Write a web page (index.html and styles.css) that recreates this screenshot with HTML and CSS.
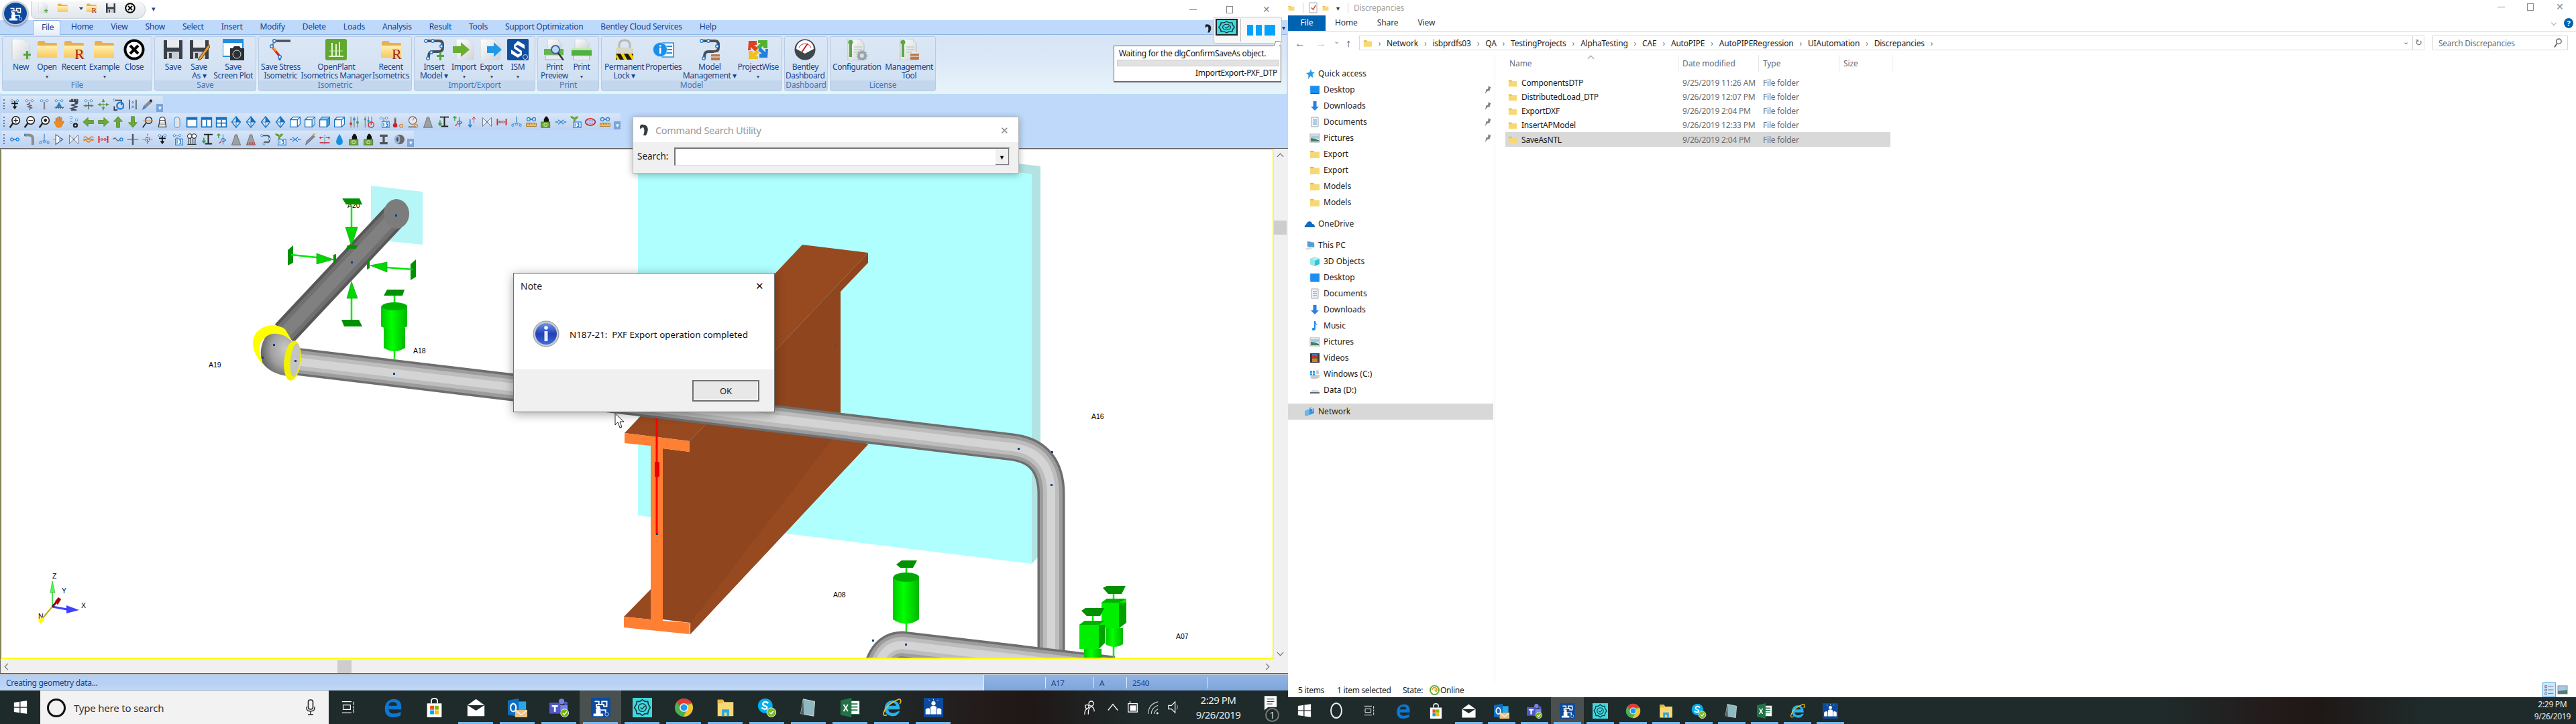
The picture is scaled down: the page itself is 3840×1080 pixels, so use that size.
FILE: index.html
```html
<!DOCTYPE html>
<html lang="en">
<head>
<meta charset="utf-8">
<title>AutoPIPE and Discrepancies</title>
<link rel="stylesheet" href="styles.css">
</head>
<body>
<svg class="defs" width="0" height="0" aria-hidden="true">
<defs>
<linearGradient id="gFolder" x1="0" y1="0" x2="0" y2="1"><stop offset="0" stop-color="#fff0b0"/><stop offset="1" stop-color="#f8c860"/></linearGradient>
<linearGradient id="gPage" x1="0" y1="0" x2="1" y2="1"><stop offset="0" stop-color="#fff"/><stop offset="1" stop-color="#cfd4d8"/></linearGradient>
<linearGradient id="gGreen" x1="0" y1="0" x2="1" y2="0"><stop offset="0" stop-color="#00c800"/><stop offset=".4" stop-color="#00ff00"/><stop offset="1" stop-color="#00b800"/></linearGradient>
<linearGradient id="gInfo" x1="0" y1="0" x2="0" y2="1"><stop offset="0" stop-color="#6f96e8"/><stop offset=".5" stop-color="#2040b8"/><stop offset="1" stop-color="#3f6ad8"/></linearGradient>
<radialGradient id="gElbow" cx=".62" cy=".45" r=".6"><stop offset="0" stop-color="#c8c8c8"/><stop offset=".6" stop-color="#a0a0a0"/><stop offset="1" stop-color="#686868"/></radialGradient>

<symbol id="r-new" viewBox="0 0 32 32"><path d="M3 0H20L29 9V32H3Z" fill="url(#gPage)" stroke="#c8ccd0"/><path d="M20 0V9H29Z" fill="#e8eaec"/><path d="M20 22H24V18H27V22H31V25H27V30H24V25H20Z" fill="#4fa83c"/></symbol>
<symbol id="r-folder" viewBox="0 0 32 32"><path d="M2 6Q2 3 5 3H12L14 6H29Q31 6 31 8V28H2Z" fill="#e8b050"/><path d="M1 10H31V28H1Z" fill="url(#gFolder)"/></symbol>
<symbol id="r-folderR" viewBox="0 0 32 32"><path d="M2 6Q2 3 5 3H12L14 6H29Q31 6 31 8V28H2Z" fill="#e8b050"/><path d="M1 10H31V28H1Z" fill="url(#gFolder)"/><text x="17" y="30" font-family="Liberation Serif" font-size="22" fill="#a02020">R</text></symbol>
<symbol id="r-close" viewBox="0 0 32 32"><circle cx="16" cy="16" r="13.5" fill="#fff" stroke="#000" stroke-width="4"/><path d="M10 10L22 22M22 10L10 22" stroke="#000" stroke-width="4"/></symbol>
<symbol id="r-disk" viewBox="0 0 32 32"><path d="M2 2H30V30H2Z" fill="#3a4048"/><path d="M7 2H25V13H7Z" fill="#e8ecef"/><path d="M7 19H25V30H7Z" fill="#c8ced3"/><path d="M10 21H14V29H10Z" fill="#3a4048"/></symbol>
<symbol id="r-diskp" viewBox="0 0 32 32"><use href="#r-disk"/><path d="M30 8L16 28L14 32L19 30L32 12Z" fill="#e8a030" stroke="#5a3a10"/></symbol>
<symbol id="r-plot" viewBox="0 0 32 32"><path d="M0 0H30V26H0Z" fill="#fff" stroke="#1f8fe0" stroke-width="2"/><path d="M0 0H30V6H0Z" fill="#1f8fe0"/><path d="M11 14H15L17 11H25L27 14H32V32H11Z" fill="#2c3034"/><circle cx="21" cy="23" r="6" fill="#2c3034" stroke="#e8e8e8"/></symbol>
<symbol id="r-stress" viewBox="0 0 32 32"><path d="M8 3H31" stroke="#4a5058" stroke-width="3.5"/><path d="M8 3L3 11" stroke="#e08030" stroke-width="3"/><path d="M3 11L15 26" stroke="#d02020" stroke-width="3.5"/><path d="M10 18L3 11" stroke="#f0a030" stroke-width="3"/><path d="M15 26L15 32" stroke="#4a5058" stroke-width="3"/><circle cx="7" cy="3" r="2.3" fill="#fff" stroke="#1f78d0" stroke-width="1.5"/><circle cx="3" cy="11" r="2.3" fill="#fff" stroke="#1f78d0" stroke-width="1.5"/><circle cx="15" cy="27" r="2.3" fill="#fff" stroke="#1f78d0" stroke-width="1.5"/></symbol>
<symbol id="r-op" viewBox="0 0 32 32"><rect width="32" height="32" rx="3" fill="#60a830"/><path d="M10 25V6M16 25V8M21 25V5M5 26H27" stroke="#e8f8d0" stroke-width="2"/><path d="M6 18H26" stroke="#c8e8a0"/></symbol>
<symbol id="r-insert" viewBox="0 0 32 32"><path d="M3 3H24Q29 3 29 9V13Q29 19 22 19H14Q8 19 8 26V30" fill="none" stroke="#4a5058" stroke-width="4"/><circle cx="4" cy="3" r="2.2" fill="#fff" stroke="#1f78d0" stroke-width="1.4"/><circle cx="14" cy="3" r="2.2" fill="#fff" stroke="#1f78d0" stroke-width="1.4"/><circle cx="27" cy="11" r="2.2" fill="#fff" stroke="#1f78d0" stroke-width="1.4"/><circle cx="12" cy="20" r="2.2" fill="#fff" stroke="#1f78d0" stroke-width="1.4"/><circle cx="7" cy="29" r="2.2" fill="#fff" stroke="#1f78d0" stroke-width="1.4"/><path d="M20 24H24V20H27V24H31V27H27V32H24V27H20Z" fill="#4fa83c"/></symbol>
<symbol id="r-import" viewBox="0 0 32 32"><path d="M5 0H22L31 9V32H5Z" fill="url(#gPage)" stroke="#d0d4d8"/><path d="M0 11H12V5L25 16L12 27V21H0Z" fill="#68b030"/></symbol>
<symbol id="r-export" viewBox="0 0 32 32"><path d="M0 0H20L29 9V32H0Z" fill="url(#gPage)" stroke="#d0d4d8"/><path d="M10 11H20V5L32 16L20 27V21H10Z" fill="#2098e8"/></symbol>
<symbol id="r-ism" viewBox="0 0 32 32"><rect width="32" height="32" rx="2" fill="#0f4fa0"/><path d="M16 3L26 9V15L16 9L12 11L22 18V24L16 28L6 22V16L16 23L20 21L10 14V9Z" fill="#fff"/><circle cx="27" cy="27" r="3.5" fill="none" stroke="#cde" stroke-width="1"/></symbol>
<symbol id="r-prev" viewBox="0 0 32 32"><path d="M6 0H20L27 7V17H6Z" fill="url(#gPage)" stroke="#ccd"/><path d="M1 15H30V24H1Z" fill="#60b848"/><path d="M3 24H28V31H3Z" fill="#e8ecef" stroke="#aab"/><circle cx="18" cy="16" r="6" fill="#bcd8f8" stroke="#4060a0" stroke-width="2"/><path d="M22 21L30 32" stroke="#333" stroke-width="2.4"/></symbol>
<symbol id="r-print" viewBox="0 0 32 32"><path d="M6 0H20L27 7V15H6Z" fill="url(#gPage)" stroke="#ccd"/><path d="M1 14H31V25H1Z" fill="#50b040"/><path d="M1 14H31V17H1Z" fill="#c0e8b0"/><path d="M4 25H28V32H4Z" fill="#e8ecef" stroke="#aab"/></symbol>
<symbol id="r-lock" viewBox="0 0 32 32"><path d="M8 14V9Q8 2 16 2Q24 2 24 9V14" fill="none" stroke="#b8b8b0" stroke-width="3"/><rect x="3" y="13" width="26" height="18" rx="2" fill="#d8d8c8"/><path d="M3 22H29V31H3Z" fill="#1a1a1a"/><path d="M4 22L9 31H5L3 27ZM10 22H15L20 31H15ZM21 22H26L29 26V31H27Z" fill="#f0d000"/></symbol>
<symbol id="r-props" viewBox="0 0 32 32"><path d="M14 6H31V27H14Z" fill="#fff" stroke="#2090e0" stroke-width="1.6"/><path d="M17 11H29M17 16H29M17 21H29" stroke="#2090e0" stroke-width="2"/><circle cx="11" cy="16" r="10.5" fill="#1a8ee8" stroke="#a8d8f8"/><rect x="10" y="13" width="2.5" height="9" fill="#fff"/><rect x="10" y="9" width="2.5" height="2.5" fill="#fff"/></symbol>
<symbol id="r-mgmt" viewBox="0 0 32 32"><path d="M3 3H24Q29 3 29 9V13Q29 19 22 19H14Q8 19 8 26V30" fill="none" stroke="#4a5058" stroke-width="4"/><circle cx="4" cy="3" r="2.2" fill="#fff" stroke="#1f78d0" stroke-width="1.4"/><circle cx="14" cy="3" r="2.2" fill="#fff" stroke="#1f78d0" stroke-width="1.4"/><circle cx="27" cy="11" r="2.2" fill="#fff" stroke="#1f78d0" stroke-width="1.4"/><circle cx="7" cy="29" r="2.2" fill="#fff" stroke="#1f78d0" stroke-width="1.4"/><rect x="18" y="23" width="13" height="9" rx="1" fill="#b87850"/><path d="M22 23V21H27V23M18 27H31" stroke="#fff" fill="none"/></symbol>
<symbol id="r-pw" viewBox="0 0 32 32"><path d="M2 3H14V9H10L16 14L12 19L5 12V17H1Z" fill="#e04020"/><path d="M30 2V14H24V10L18 16L14 12L20 6H16V2Z" fill="#50b030"/><path d="M2 30V18H8V22L14 16L18 20L12 26H16V30Z" fill="#f0c020"/><path d="M30 28H18V22H22L16 17L20 13L27 20V15H31Z" fill="#2080e0"/></symbol>
<symbol id="r-dash" viewBox="0 0 32 32"><circle cx="16" cy="16" r="15.5" fill="#3f464c"/><path d="M3 15A13 13 0 0 1 29 15L16 22Z" fill="#fff"/><path d="M11 20L20 7" stroke="#c02020" stroke-width="2"/><path d="M7 13A10 10 0 0 1 25 13" fill="none" stroke="#c02020"/></symbol>
<symbol id="r-cfg" viewBox="0 0 32 32"><path d="M3 0H20L27 7V32H3Z" fill="url(#gPage)" stroke="#b8c0b8"/><path d="M5 4H9V27H5Z" fill="#58a848"/><circle cx="7" cy="5" r="3.5" fill="#58a848"/><path d="M12 12H24M12 16H24M12 20H20" stroke="#a8c8a0"/><circle cx="24" cy="25" r="5" fill="none" stroke="#98a0a8" stroke-width="3.4"/><circle cx="24" cy="25" r="7.4" fill="none" stroke="#98a0a8" stroke-width="1.6" stroke-dasharray="2 2"/></symbol>
<symbol id="r-mt" viewBox="0 0 32 32"><path d="M3 0H20L27 7V32H3Z" fill="url(#gPage)" stroke="#b8c0b8"/><path d="M5 4H9V27H5Z" fill="#58a848"/><circle cx="7" cy="5" r="3.5" fill="#58a848"/><path d="M12 12H24M12 16H24M12 20H20" stroke="#a8c8a0"/><rect x="18" y="22" width="13" height="9" rx="1" fill="#b87850"/><path d="M22 22V20H27V22M18 26H31" stroke="#fff" fill="none"/></symbol>

<symbol id="dots" viewBox="0 0 22 22"><path d="M3 4H19" stroke="#889"/><circle cx="6" cy="4" r="2" fill="#fff" stroke="#2080d8"/><circle cx="16" cy="4" r="2" fill="#fff" stroke="#2080d8"/></symbol>
<symbol id="t1" viewBox="0 0 22 22"><use href="#dots"/><path d="M11 5V9M5 9H17M11 9V19M8 14L11 18L14 14" fill="none" stroke="#111" stroke-width="2"/></symbol>
<symbol id="t2" viewBox="0 0 22 22"><use href="#dots"/><path d="M11 6V9L7 11L15 13L7 15L15 17L11 19V21" fill="none" stroke="#556" stroke-width="1.5"/></symbol>
<symbol id="t3" viewBox="0 0 22 22"><use href="#dots"/><path d="M11 6V20" stroke="#889" stroke-width="3"/></symbol>
<symbol id="t4" viewBox="0 0 22 22"><use href="#dots"/><path d="M11 6L16 15H6Z" fill="#2080d8"/><path d="M3 16H19M5 19L7 16M9 19L11 16M13 19L15 16M17 19L19 16" stroke="#222"/></symbol>
<symbol id="t5" viewBox="0 0 22 22"><path d="M4 2V5H7V2H9V5H12V2H14V5H17V2H18V7H14V9H18L6 12L18 15L6 18L16 21H6" fill="none" stroke="#445" stroke-width="2"/></symbol>
<symbol id="t6" viewBox="0 0 22 22"><use href="#dots"/><path d="M11 6V20M2 13H20" stroke="#556" stroke-width="1.5"/><path d="M2 13L7 10V16ZM20 13L15 10V16Z" fill="#5a9a40"/></symbol>
<symbol id="t7" viewBox="0 0 22 22"><path d="M11 1V21" stroke="#445" stroke-dasharray="2 1"/><path d="M1 11H21" stroke="#5a9a40" stroke-width="1.5"/><path d="M1 11L6 8V14ZM21 11L16 8V14ZM11 1L8 6H14ZM11 21L8 16H14Z" fill="#5a9a40"/></symbol>
<symbol id="t8" viewBox="0 0 22 22"><path d="M4 3H17V12" fill="none" stroke="#333" stroke-width="2"/><circle cx="4" cy="3" r="2" fill="#fff" stroke="#2080d8"/><circle cx="15" cy="13" r="6" fill="none" stroke="#2080d8" stroke-width="3"/><path d="M4 14V21H10" fill="none" stroke="#333" stroke-width="2"/></symbol>
<symbol id="t9" viewBox="0 0 22 22"><path d="M5 2V20M17 2V20" stroke="#333" stroke-width="1.6"/><circle cx="11" cy="7" r="1.6" fill="none" stroke="#2080d8"/><circle cx="11" cy="15" r="1.6" fill="none" stroke="#2080d8"/></symbol>
<symbol id="t10" viewBox="0 0 22 22"><path d="M16 2L20 6L8 17L4 13Z" fill="#889"/><path d="M4 13L1 21L8 17Z" fill="#2080d8"/><circle cx="17" cy="4" r="2.4" fill="#333"/></symbol>
<symbol id="zp" viewBox="0 0 22 22"><circle cx="13" cy="8" r="7" fill="#fff" stroke="#222" stroke-width="2"/><path d="M8 13L2 21" stroke="#222" stroke-width="3"/><path d="M9 8H17M13 4V12" stroke="#222" stroke-width="1.6"/></symbol>
<symbol id="zm" viewBox="0 0 22 22"><circle cx="13" cy="8" r="7" fill="#fff" stroke="#222" stroke-width="2"/><path d="M8 13L2 21" stroke="#222" stroke-width="3"/><path d="M9 8H17" stroke="#222" stroke-width="1.6"/></symbol>
<symbol id="zw" viewBox="0 0 22 22"><circle cx="13" cy="8" r="7" fill="#fff" stroke="#222" stroke-width="2"/><path d="M8 13L2 21" stroke="#222" stroke-width="3"/><circle cx="13" cy="8" r="3" fill="#222"/></symbol>
<symbol id="hand" viewBox="0 0 22 22"><path d="M5 10V4H7V9H8V2H10V9H11V1H13V9H14V3H16V12L19 9L20 11L15 20Q14 21 10 21Q6 21 5 17L2 12L3 10Z" fill="#f08a20" stroke="#c06010" stroke-width=".6"/></symbol>
<symbol id="nodes" viewBox="0 0 22 22"><circle cx="6" cy="3" r="2" fill="#fff" stroke="#2080d8"/><circle cx="6" cy="12" r="2" fill="#fff" stroke="#2080d8"/><circle cx="16" cy="7" r="2" fill="#fff" stroke="#2080d8"/><circle cx="14" cy="17" r="4.5" fill="#222"/><circle cx="14" cy="17" r="1.5" fill="#fff"/></symbol>
<symbol id="al" viewBox="0 0 22 22"><path d="M1 11L10 3V8H20V14H10V19Z" fill="#6ca83c" stroke="#4f8a20"/></symbol>
<symbol id="ar" viewBox="0 0 22 22"><path d="M21 11L12 3V8H2V14H12V19Z" fill="#6ca83c" stroke="#4f8a20"/></symbol>
<symbol id="au" viewBox="0 0 22 22"><path d="M11 1L19 10H14V21H8V10H3Z" fill="#6ca83c" stroke="#4f8a20"/></symbol>
<symbol id="ad" viewBox="0 0 22 22"><path d="M11 21L19 12H14V1H8V12H3Z" fill="#6ca83c" stroke="#4f8a20"/></symbol>
<symbol id="mag" viewBox="0 0 22 22"><circle cx="13" cy="8" r="6" fill="none" stroke="#222" stroke-width="1.6"/><path d="M8 13L2 21" stroke="#222" stroke-width="2"/><path d="M3 9H21" stroke="#e08020" stroke-width="1.6"/></symbol>
<symbol id="hood" viewBox="0 0 22 22"><path d="M6 10Q5 2 11 2Q17 2 16 10L18 20H4Z" fill="#fff" stroke="#333" stroke-width="1.5"/><path d="M6 8H16M5 13H17M5 16H17" stroke="#333"/></symbol>
<symbol id="caps" viewBox="0 0 22 22"><path d="M6 18V8Q6 2 11 2Q16 2 16 8V18Q16 21 11 21Q6 21 6 18Z" fill="#dfe4ea" stroke="#2080d8"/></symbol>
<symbol id="w1" viewBox="0 0 22 22"><path d="M2 3H20V20H2Z" fill="#fff" stroke="#1070c0" stroke-width="2"/><path d="M2 3H20V7H2Z" fill="#1070c0"/></symbol>
<symbol id="w2" viewBox="0 0 22 22"><use href="#w1"/><path d="M11 7V20" stroke="#1070c0" stroke-width="2"/></symbol>
<symbol id="w4" viewBox="0 0 22 22"><use href="#w2"/><path d="M2 13H20" stroke="#1070c0" stroke-width="2"/></symbol>
<symbol id="dia" viewBox="0 0 22 22"><path d="M11 1L19 11L11 21L3 11Z" fill="#d8e8f8" stroke="#1070c0" stroke-width="1.5"/><path d="M11 1V21M3 11H19" stroke="#1070c0"/><path d="M11 1L19 11L11 11Z" fill="#1070c0"/></symbol>
<symbol id="cube" viewBox="0 0 22 22"><path d="M2 7L7 2H20V15L15 20H2Z" fill="#fff" stroke="#1070c0" stroke-width="1.5"/><path d="M2 7H15V20M15 7L20 2" fill="none" stroke="#1070c0" stroke-width="1.5"/></symbol>
<symbol id="cubet" viewBox="0 0 22 22"><use href="#cube"/><path d="M15 7L20 2V15L15 20Z" fill="#b8e0f8" stroke="#1070c0"/></symbol>
<symbol id="cubef" viewBox="0 0 22 22"><use href="#cube"/><path d="M2 7L7 2H20L15 7Z" fill="#8cc8f0" stroke="#1070c0"/><path d="M15 7L20 2V15L15 20Z" fill="#40a0e8" stroke="#1070c0"/></symbol>
<symbol id="sl" viewBox="0 0 22 22"><path d="M5 1V21M11 1V21M17 1V21" stroke="#555"/><circle cx="5" cy="14" r="2.4" fill="#d03030"/><circle cx="11" cy="6" r="2.4" fill="#2090e0"/><circle cx="17" cy="12" r="2.4" fill="#40a040"/></symbol>
<symbol id="sp" viewBox="0 0 22 22"><path d="M4 1V21M10 1V21M16 1V12" stroke="#555"/><circle cx="4" cy="6" r="2" fill="#40a040"/><circle cx="10" cy="9" r="2" fill="#2090e0"/><circle cx="15" cy="16" r="5" fill="none" stroke="#d03030" stroke-width="1.6"/><path d="M15 11V16" stroke="#d03030" stroke-width="1.6"/></symbol>
<symbol id="n13" viewBox="0 0 22 22"><use href="#dots"/><rect x="8" y="10" width="13" height="11" fill="#e8f4ff" stroke="#2080d8" stroke-width="1.4"/><path d="M11 12V19M15 12H18L16 15H18V19H15" fill="none" stroke="#1060b0" stroke-width="1.2"/><path d="M11 6V10" stroke="#556"/></symbol>
<symbol id="therm" viewBox="0 0 22 22"><path d="M5 3V14" stroke="#8a8a8a" stroke-width="4"/><circle cx="5" cy="17" r="4" fill="#d02020"/><path d="M5 6V16" stroke="#d02020" stroke-width="2"/><circle cx="16" cy="18" r="3" fill="none" stroke="#e08020" stroke-width="1.4"/></symbol>
<symbol id="gauge" viewBox="0 0 22 22"><circle cx="10" cy="8" r="7" fill="#e8e8e8" stroke="#666" stroke-width="1.4"/><path d="M10 8L13 3" stroke="#c02020"/><path d="M2 20H16" stroke="#666" stroke-width="2"/><circle cx="16" cy="18" r="3" fill="none" stroke="#e08020" stroke-width="1.4"/></symbol>
<symbol id="wt" viewBox="0 0 22 22"><path d="M8 7Q8 2 11 2Q14 2 14 7L19 21H3Z" fill="#9aa0a4" stroke="#666"/></symbol>
<symbol id="wt2" viewBox="0 0 22 22"><use href="#wt"/><path d="M5 16V21M8 16V21M11 16V21M14 16V21M17 16V21" stroke="#d03030"/></symbol>
<symbol id="ld" viewBox="0 0 22 22"><path d="M14 2V19M6 2H22M8 19H21" stroke="#222" stroke-width="2.4"/><path d="M6 8V16M3 13L6 17L9 13" fill="none" stroke="#30a030" stroke-width="2"/></symbol>
<symbol id="rot" viewBox="0 0 22 22"><path d="M6 2V9M3 4L6 1L9 4" fill="none" stroke="#30a030" stroke-width="1.6"/><path d="M14 2V20" stroke="#445"/><path d="M10 12Q14 6 19 12Q14 17 10 13" fill="none" stroke="#2080d8" stroke-width="1.6"/><path d="M7 18L10 15" stroke="#d03030" stroke-width="1.6"/></symbol>
<symbol id="rf" viewBox="0 0 22 22"><path d="M14 2V12M11 6L14 2L17 6" fill="none" stroke="#d03030" stroke-width="1.6" stroke-dasharray="2 1"/><path d="M7 6V20M4 16L7 20L10 16" fill="none" stroke="#2080d8" stroke-width="2"/></symbol>
<symbol id="bow" viewBox="0 0 22 22"><path d="M3 3L19 19V3L3 19Z" fill="#e8eef4" stroke="#667"/><circle cx="11" cy="11" r="1.6" fill="#2080d8"/></symbol>
<symbol id="rb" viewBox="0 0 22 22"><path d="M3 5V17M19 5V17" stroke="#d03030" stroke-width="2.4"/><path d="M3 11H19" stroke="#2060a0" stroke-dasharray="2 1"/><circle cx="8" cy="11" r="2" fill="none" stroke="#d03030"/><circle cx="14" cy="11" r="2" fill="none" stroke="#d03030"/></symbol>
<symbol id="jn" viewBox="0 0 22 22"><path d="M11 1V12" stroke="#2080d8" stroke-width="1.4"/><path d="M3 15Q11 11 19 15" fill="none" stroke="#889"/><circle cx="11" cy="15" r="2" fill="none" stroke="#2080d8"/><circle cx="4" cy="17" r="2" fill="none" stroke="#2080d8"/><circle cx="18" cy="17" r="2" fill="none" stroke="#2080d8"/></symbol>
<symbol id="oor" viewBox="0 0 22 22"><circle cx="6" cy="6" r="3" fill="none" stroke="#2080d8" stroke-width="1.5"/><circle cx="16" cy="6" r="3" fill="none" stroke="#2080d8" stroke-width="1.5"/><path d="M9 6H13" stroke="#333" stroke-width="1.5"/><rect x="2" y="13" width="18" height="6" fill="#f0c060" stroke="#a07020"/><path d="M5 13V16M8 13V16M11 13V16M14 13V16M17 13V16" stroke="#a07020"/></symbol>
<symbol id="bl" viewBox="0 0 22 22"><path d="M7 12V6L10 1H13L16 6V12Z" fill="#111"/><rect x="2" y="11" width="16" height="10" fill="#70a838" stroke="#3f7020"/><circle cx="10" cy="16" r="3" fill="none" stroke="#fff"/></symbol>
<symbol id="vv" viewBox="0 0 22 22"><path d="M1 11H6M16 11H21" stroke="#2080d8" stroke-width="1.6"/><path d="M6 7L11 11L6 15M16 7L11 11L16 15" fill="none" stroke="#2080d8" stroke-width="1.5"/></symbol>
<symbol id="plant" viewBox="0 0 22 22"><path d="M8 10V5Q3 5 2 1Q8 1 9 4Q11 1 15 1Q15 5 10 6V10" fill="#70b030" stroke="#508820"/><rect x="7" y="11" width="14" height="10" fill="#e8f4ff" stroke="#2080d8" stroke-width="1.4"/><path d="M10 13V19M14 13H17L15 15H17V19H14" fill="none" stroke="#1060b0" stroke-width="1.2"/></symbol>
<symbol id="rr" viewBox="0 0 22 22"><ellipse cx="11" cy="11" rx="9" ry="6" fill="none" stroke="#d03030" stroke-width="2.4"/><path d="M2 9H20M2 13H20" stroke="#6060c0" stroke-width="1.4" stroke-dasharray="2 1"/></symbol>
<symbol id="lk" viewBox="0 0 22 22"><circle cx="6" cy="11" r="2.6" fill="none" stroke="#2080d8" stroke-width="1.5"/><circle cx="16" cy="11" r="2.6" fill="none" stroke="#2080d8" stroke-width="1.5"/><path d="M9 11H13" stroke="#333" stroke-width="1.4"/></symbol>
<symbol id="bd" viewBox="0 0 22 22"><path d="M2 3H10Q17 3 17 10V21" fill="none" stroke="#8a8e92" stroke-width="5"/><path d="M2 1V5" stroke="#2080d8" stroke-width="1.4"/></symbol>
<symbol id="tri" viewBox="0 0 22 22"><path d="M5 2L18 11L5 20Z" fill="#fff" stroke="#556" stroke-width="1.3"/><circle cx="13" cy="11" r="2" fill="none" stroke="#2080d8"/><path d="M1 11H6" stroke="#2080d8"/></symbol>
<symbol id="coil" viewBox="0 0 22 22"><path d="M2 8Q5 4 8 8T14 8T20 8M2 14Q5 10 8 14T14 14T20 14" fill="none" stroke="#e08020" stroke-width="1.8"/><path d="M1 11H21" stroke="#2080d8"/></symbol>
<symbol id="wv" viewBox="0 0 22 22"><path d="M2 11Q5 6 8 11T14 11" fill="none" stroke="#556" stroke-width="1.5"/><circle cx="17" cy="11" r="2.6" fill="none" stroke="#2080d8" stroke-width="1.5"/></symbol>
<symbol id="crs" viewBox="0 0 22 22"><path d="M1 11H21" stroke="#2080d8" stroke-width="1.5"/><path d="M11 1V21" stroke="#556" stroke-width="3"/></symbol>
<symbol id="sight" viewBox="0 0 22 22"><path d="M11 1V21" stroke="#d03030" stroke-width="1.5" stroke-dasharray="3 2"/><path d="M1 11H21" stroke="#2080d8" stroke-dasharray="3 1"/><circle cx="11" cy="11" r="4" fill="none" stroke="#d03030" stroke-dasharray="2 1" stroke-width="1.4"/></symbol>
<symbol id="tube" viewBox="0 0 22 22"><circle cx="7" cy="5" r="4" fill="#fff" stroke="#333" stroke-width="1.3"/><circle cx="15" cy="5" r="4" fill="#fff" stroke="#333" stroke-width="1.3"/><path d="M5 8V19M9 8V19M13 8V19M17 8V19M3 20H19" stroke="#333" stroke-width="1.3"/></symbol>
<symbol id="loop" viewBox="0 0 22 22"><path d="M4 4H14Q18 4 18 9V13Q18 17 13 16Q8 14 8 20" fill="none" stroke="#555" stroke-width="2.4"/><circle cx="4" cy="4" r="2" fill="#fff" stroke="#2080d8"/><circle cx="18" cy="10" r="2" fill="#fff" stroke="#2080d8"/><circle cx="8" cy="19" r="2" fill="#fff" stroke="#2080d8"/></symbol>
<symbol id="syr" viewBox="0 0 22 22"><path d="M17 3L20 6L8 17L3 21L5 14Z" fill="#889" stroke="#445" stroke-width=".6"/><path d="M16 2L21 1" stroke="#e8a030" stroke-width="2"/></symbol>
<symbol id="rl" viewBox="0 0 22 22"><path d="M2 8H9M4 6L2 8L4 10M13 8H20M18 6L20 8L18 10" fill="none" stroke="#d03030" stroke-width="1.4"/><path d="M2 17H20" stroke="#d03030" stroke-width="2"/><path d="M11 3V21" stroke="#2060a0" stroke-dasharray="2 1"/></symbol>
<symbol id="drop" viewBox="0 0 22 22"><path d="M11 1Q5 11 5 15Q5 21 11 21Q17 21 17 15Q17 11 11 1Z" fill="#1890e0"/></symbol>
<symbol id="ib" viewBox="0 0 22 22"><path d="M4 2H18V6H13V16H18V20H4V16H9V6H4Z" fill="#505458"/></symbol>
<symbol id="spk" viewBox="0 0 22 22"><circle cx="13" cy="11" r="9" fill="#666a70"/><ellipse cx="9" cy="11" rx="5" ry="8" fill="#b0b4b8"/><ellipse cx="9" cy="11" rx="2" ry="4" fill="#1060b0"/></symbol>

<symbol id="k-edge" viewBox="0 0 32 32"><path d="M30 19H9Q10 26 18 26Q24 26 29 23V29Q24 32 17 32Q3 32 3 18Q3 4 17 2Q30 2 30 15ZM23 13Q23 7 16 7Q10 7 9 13Z" fill="#0b78d4"/></symbol>
<symbol id="k-store" viewBox="0 0 32 32"><path d="M4 9H28V31Q28 32 27 32H5Q4 32 4 31Z" fill="#fff"/><path d="M11 9V5Q11 1 16 1Q21 1 21 5V9" fill="none" stroke="#fff" stroke-width="2"/><rect x="9" y="13" width="6.5" height="6.5" fill="#f25022"/><rect x="16.5" y="13" width="6.5" height="6.5" fill="#7fba00"/><rect x="9" y="20.5" width="6.5" height="6.5" fill="#00a4ef"/><rect x="16.5" y="20.5" width="6.5" height="6.5" fill="#ffb900"/></symbol>
<symbol id="k-mail" viewBox="0 0 32 32"><path d="M2 12L16 2L30 12V30H2Z" fill="#fff"/><path d="M2 12H30L16 21Z" fill="#1f2a2a"/></symbol>
<symbol id="k-outlook" viewBox="0 0 32 32"><rect x="12" y="6" width="18" height="18" fill="#28a8ea"/><path d="M0 4L18 1V31L0 28Z" fill="#0f6cbd"/><ellipse cx="9" cy="16" rx="4.5" ry="6.4" fill="none" stroke="#fff" stroke-width="2.4"/><rect x="12" y="20" width="20" height="12" fill="#f0c080" opacity="1"/><path d="M12 20L22 28L32 20" fill="none" stroke="#fff" stroke-width="1.4"/></symbol>
<symbol id="k-teams" viewBox="0 0 32 32"><circle cx="20" cy="6" r="4.5" fill="#7b83eb"/><circle cx="27" cy="9" r="3" fill="#5059c9"/><path d="M14 12H30V22H14Z" fill="#7b83eb"/><path d="M0 8H18V26H0Z" fill="#5059c9"/><path d="M4 12H14V15H10.5V23H7.5V15H4Z" fill="#fff"/><circle cx="25" cy="25" r="6.5" fill="#6bb700" stroke="#fff"/><path d="M22 25L24.5 27.5L28.5 22.5" fill="none" stroke="#fff" stroke-width="1.6"/></symbol>
<symbol id="k-ap" viewBox="0 0 32 32"><rect width="32" height="32" rx="2" fill="#0c4a9e"/><path d="M6 6H13V11H18V6H26V14H21V11H18M13 11H9V16" fill="none" stroke="#fff" stroke-width="2"/><path d="M8 18H16V26H20V30H4V26H8Z" fill="#fff"/><circle cx="12" cy="16" r="3" fill="#fff"/><path d="M16 20H24V24" fill="none" stroke="#fff" stroke-width="2"/><circle cx="26" cy="27" r="3" fill="none" stroke="#cfe0ff"/></symbol>
<symbol id="k-gear" viewBox="0 0 32 32"><rect width="32" height="32" fill="#40d8e0"/><path d="M16 3L20 6H25L26 11L29 16L26 21L25 26H20L16 29L12 26H7L6 21L3 16L6 11L7 6H12Z" fill="none" stroke="#12383c" stroke-width="1.8"/><circle cx="16" cy="16" r="6.5" fill="none" stroke="#12383c" stroke-width="1.5"/><path d="M13 16L15.5 18.5L20 13.5" fill="none" stroke="#12383c" stroke-width="1.5"/></symbol>
<symbol id="k-chrome" viewBox="0 0 32 32"><circle cx="16" cy="16" r="15" fill="#4caf50"/><path d="M16 1A15 15 0 0 1 29 9H16A7 7 0 0 0 9 14L5 6A15 15 0 0 1 16 1Z" fill="#e53935"/><path d="M29 9A15 15 0 0 1 15 31L21 20A7 7 0 0 0 22 12Z" fill="#fbc02d"/><circle cx="16" cy="16" r="7" fill="#fff"/><circle cx="16" cy="16" r="5.5" fill="#2196f3"/></symbol>
<symbol id="k-exp" viewBox="0 0 32 32"><path d="M3 3H12L14 7H29V30H3Z" fill="#f8d775"/><path d="M3 3H12V9H3Z" fill="#e8b840"/><path d="M10 19H22V30H18V24H14V30H10Z" fill="#2aa8e0"/></symbol>
<symbol id="k-skype" viewBox="0 0 32 32"><circle cx="13" cy="13" r="12" fill="#00aff0"/><path d="M18 9Q14 5 10 8Q7 11 12 13Q18 15 15 18Q11 20 7 16" fill="none" stroke="#fff" stroke-width="2.6"/><circle cx="23" cy="24" r="7.5" fill="#7db82a" stroke="#fff"/><path d="M20 24L22.5 26.5L26.5 21.5" fill="none" stroke="#fff" stroke-width="1.6"/></symbol>
<symbol id="k-note" viewBox="0 0 32 32"><path d="M7 2L26 6L24 30L3 26Z" fill="#8fb8c0" stroke="#d8e8e8"/><path d="M7 2L3 26L8 28Z" fill="#506068"/></symbol>
<symbol id="k-excel" viewBox="0 0 32 32"><rect x="13" y="5" width="18" height="22" fill="#fff" stroke="#217346"/><path d="M16 10H28M16 15H28M16 20H28" stroke="#217346" stroke-width="2"/><path d="M0 4L18 0V32L0 28Z" fill="#217346"/><path d="M5 11L12 22M12 11L5 22" stroke="#fff" stroke-width="2.2"/></symbol>
<symbol id="k-ie" viewBox="0 0 32 32"><path d="M29 19H10Q11 25 18 25Q22 25 26 22H29Q25 31 16 30Q4 28 4 17Q5 5 17 4Q29 5 29 19ZM23 13Q22 8 16 8Q11 9 10 13Z" fill="#2ab0ee"/><path d="M8 28Q0 31 3 23Q8 10 28 2Q33 3 29 10" fill="none" stroke="#f0c020" stroke-width="1.8"/></symbol>
<symbol id="k-bent" viewBox="0 0 32 32"><rect width="32" height="32" rx="1" fill="#0c4a9e"/><circle cx="16" cy="9" r="3.4" fill="#fff"/><path d="M11 27V15Q16 11 21 15V27Z" fill="#fff"/><path d="M3 27V19Q7 15 10 18V27ZM29 27V19Q25 15 22 18V27Z" fill="#fff"/><path d="M10 5L8 3M22 5L24 3M16 4V2" stroke="#fff"/></symbol>
<symbol id="k-win" viewBox="0 0 24 24"><path d="M1 4L10.5 2.6V11.4H1ZM12 2.4L23 .8V11.4H12ZM1 12.8H10.5V21.4L1 20ZM12 12.8H23V23.2L12 21.6Z" fill="#fff"/></symbol>
<symbol id="k-task" viewBox="0 0 24 24"><path d="M1 2H18M1 22H18M3 8H16V16H3ZM22 2V8M22 10V14M22 16V22" fill="none" stroke="#fff" stroke-width="1.4"/></symbol>

<symbol id="n-folder" viewBox="0 0 16 16"><path d="M1 3H6L7.5 4.5H15V14H1Z" fill="#f8d775"/><path d="M1 3H6L7 5H1Z" fill="#e8b840"/></symbol>
<symbol id="n-star" viewBox="0 0 16 16"><path d="M10 1L11.5 5.5L16 6L12.5 9L13.5 14L9.5 11.5L6 16L6.5 10L3 7L8 6Z" fill="#2a9ae8"/></symbol>
<symbol id="n-desk" viewBox="0 0 16 16"><rect x="1" y="2" width="14" height="12" fill="#1c8ef0" stroke="#8cc4ef" stroke-width=".6"/><path d="M2 13H14V14H2Z" fill="#0c5aa8"/></symbol>
<symbol id="n-down" viewBox="0 0 16 16"><path d="M8 15L2 9H5.5V1H10.5V9H14Z" fill="#2a80e0"/></symbol>
<symbol id="n-doc" viewBox="0 0 16 16"><path d="M3 1H13V15H3Z" fill="#f4f6f8" stroke="#9aa4ac"/><path d="M5 5H11M5 8H11M5 11H11" stroke="#3a90d8"/></symbol>
<symbol id="n-pic" viewBox="0 0 16 16"><rect x="1" y="2" width="14" height="12" fill="#fff" stroke="#a0a8b0"/><path d="M2 4H14V9L2 8Z" fill="#a8c8e8"/><path d="M2 8Q8 8 14 11V13H2Z" fill="#40805c"/></symbol>
<symbol id="n-cloud" viewBox="0 0 16 16"><path d="M1 13Q0 10 3 9Q4 5 8 4Q12 5 12 8Q16 8 16 13Z" fill="#0f6cbd"/></symbol>
<symbol id="n-pc" viewBox="0 0 16 16"><path d="M5 2L15 4V11L5 10Z" fill="#4aa0e0" stroke="#a0a8b0" stroke-width=".6"/><path d="M1 13L9 11L13 13L5 15Z" fill="#d8dce0"/></symbol>
<symbol id="n-3d" viewBox="0 0 16 16"><path d="M8 1L15 4V12L8 15L1 12V4Z" fill="#38c0d8"/><path d="M1 4L8 7L15 4L8 1Z" fill="#b0f0f0"/><path d="M8 7V15L1 12V4Z" fill="#90e8e8"/></symbol>
<symbol id="n-music" viewBox="0 0 16 16"><path d="M7 1H9Q9 5 13 7Q10 7 9 5V12Q9 15 6 15Q3 15 4 12Q5 10 7 11Z" fill="#1c8ef0"/></symbol>
<symbol id="n-vid" viewBox="0 0 16 16"><rect x="1" y="1" width="14" height="14" fill="#3a3a3a"/><rect x="4" y="2" width="8" height="5.5" fill="#3080c0"/><rect x="4" y="8.5" width="8" height="5.5" fill="#d08030"/><path d="M4 5L8 3L12 6V7.5H4Z" fill="#d03030"/></symbol>
<symbol id="n-win" viewBox="0 0 16 16"><path d="M4 9H15V13L11 15H3L1 13Z" fill="#c8ccd0"/><rect x="1" y="3" width="3" height="3" fill="#18a0f0"/><rect x="5" y="3" width="3" height="3" fill="#18a0f0"/><rect x="1" y="7" width="3" height="3" fill="#18a0f0"/><rect x="5" y="7" width="3" height="3" fill="#18a0f0"/><path d="M10 8V4Q10 2 12 2Q14 2 14 4V8Z" fill="#c8ccd0"/></symbol>
<symbol id="n-disk" viewBox="0 0 16 16"><path d="M4 8H13L15 11V13H1V11Z" fill="#d8dce0"/><path d="M1 11H15V13H1Z" fill="#60666c"/></symbol>
<symbol id="n-net" viewBox="0 0 16 16"><path d="M8 1L15 4V10L8 13Z" fill="#3a90d8"/><path d="M1 7L8 4V13L3 15L1 13Z" fill="#68b8e8"/><path d="M7 2L13 4V8" stroke="#d8e8f4" fill="none"/></symbol>
<symbol id="n-pin" viewBox="0 0 12 16"><path d="M7 1L11 4L9 6V9L6 9L3 12L1 14L3 9L3 7L6 6Z" fill="#7c8288"/></symbol>
</defs>
</svg>

<div class="screen">
  <section class="app">
    <header class="app-title">
      <div class="app-logo"><svg class="logo-i"><use href="#k-ap"/></svg></div>
      <div class="qat">
        <svg class="q"><use href="#r-new"/></svg>
        <svg class="q"><use href="#r-folder"/></svg>
        <span class="qdrop"></span>
        <svg class="q"><use href="#r-folderR"/></svg>
        <svg class="q"><use href="#r-disk"/></svg>
        <svg class="q"><use href="#r-close"/></svg>
      </div>
      <span class="qat-more">▾</span>
      <div class="win-ctl app-ctl">
        <span class="min"></span><span class="rest"></span><span class="cls">✕</span>
      </div>
    </header>

    <nav class="tabs">
      <span class="tab active">File</span><span class="tab t-home">Home</span><span class="tab">View</span><span class="tab">Show</span><span class="tab">Select</span><span class="tab">Insert</span><span class="tab">Modify</span><span class="tab">Delete</span><span class="tab">Loads</span><span class="tab">Analysis</span><span class="tab">Result</span><span class="tab">Tools</span><span class="tab">Support Optimization</span><span class="tab">Bentley Cloud Services</span><span class="tab">Help</span>
    </nav>

    <div class="ribbon">
      <div class="panel p-file">
        <div class="btns">
          <div class="rb"><svg class="ri"><use href="#r-new"/></svg><span>New</span></div>
          <div class="rb"><svg class="ri"><use href="#r-folder"/></svg><span>Open</span><i>▾</i></div>
          <div class="rb"><svg class="ri"><use href="#r-folderR"/></svg><span>Recent</span></div>
          <div class="rb"><svg class="ri"><use href="#r-folder"/></svg><span>Example</span><i>▾</i></div>
          <div class="rb"><svg class="ri"><use href="#r-close"/></svg><span>Close</span></div>
        </div>
        <div class="ptitle">File</div>
      </div>
      <div class="panel p-save">
        <div class="btns">
          <div class="rb"><svg class="ri"><use href="#r-disk"/></svg><span>Save</span></div>
          <div class="rb"><svg class="ri"><use href="#r-diskp"/></svg><span>Save<br>As ▾</span></div>
          <div class="rb"><svg class="ri"><use href="#r-plot"/></svg><span>Save<br>Screen Plot</span></div>
        </div>
        <div class="ptitle">Save</div>
      </div>
      <div class="panel p-iso">
        <div class="btns">
          <div class="rb"><svg class="ri"><use href="#r-stress"/></svg><span>Save Stress<br>Isometric</span></div>
          <div class="rb"><svg class="ri"><use href="#r-op"/></svg><span>OpenPlant<br>Isometrics Manager</span></div>
          <div class="rb"><svg class="ri"><use href="#r-folderR"/></svg><span>Recent<br>Isometrics</span></div>
        </div>
        <div class="ptitle">Isometric</div>
      </div>
      <div class="panel p-imp">
        <div class="btns">
          <div class="rb"><svg class="ri"><use href="#r-insert"/></svg><span>Insert<br>Model ▾</span></div>
          <div class="rb"><svg class="ri"><use href="#r-import"/></svg><span>Import</span><i>▾</i></div>
          <div class="rb"><svg class="ri"><use href="#r-export"/></svg><span>Export</span><i>▾</i></div>
          <div class="rb"><svg class="ri"><use href="#r-ism"/></svg><span>ISM</span><i>▾</i></div>
        </div>
        <div class="ptitle">Import/Export</div>
      </div>
      <div class="panel p-print">
        <div class="btns">
          <div class="rb"><svg class="ri"><use href="#r-prev"/></svg><span>Print<br>Preview</span></div>
          <div class="rb"><svg class="ri"><use href="#r-print"/></svg><span>Print</span><i>▾</i></div>
        </div>
        <div class="ptitle">Print</div>
      </div>
      <div class="panel p-model">
        <div class="btns">
          <div class="rb"><svg class="ri"><use href="#r-lock"/></svg><span>Permanent<br>Lock ▾</span></div>
          <div class="rb"><svg class="ri"><use href="#r-props"/></svg><span>Properties</span></div>
          <div class="rb"><svg class="ri"><use href="#r-mgmt"/></svg><span>Model<br>Management ▾</span></div>
          <div class="rb"><svg class="ri"><use href="#r-pw"/></svg><span>ProjectWise</span><i>▾</i></div>
        </div>
        <div class="ptitle">Model</div>
      </div>
      <div class="panel p-dash">
        <div class="btns">
          <div class="rb"><svg class="ri"><use href="#r-dash"/></svg><span>Bentley<br>Dashboard</span></div>
        </div>
        <div class="ptitle">Dashboard</div>
      </div>
      <div class="panel p-lic">
        <div class="btns">
          <div class="rb"><svg class="ri"><use href="#r-cfg"/></svg><span>Configuration</span></div>
          <div class="rb"><svg class="ri"><use href="#r-mt"/></svg><span>Management<br>Tool</span></div>
        </div>
        <div class="ptitle">License</div>
      </div>
    </div>

    <div class="toolbars">
      <div class="tb tb1">
        <svg><use href="#t1"/></svg><svg><use href="#t2"/></svg><svg><use href="#t3"/></svg><svg><use href="#t4"/></svg><svg><use href="#t5"/></svg><svg><use href="#t6"/></svg><svg><use href="#t7"/></svg><svg><use href="#t8"/></svg><svg><use href="#t9"/></svg><svg><use href="#t10"/></svg>
      </div>
      <div class="tb tb2">
        <svg><use href="#zp"/></svg><svg><use href="#zm"/></svg><svg><use href="#zw"/></svg><svg><use href="#hand"/></svg><svg><use href="#nodes"/></svg><svg><use href="#al"/></svg><svg><use href="#ar"/></svg><svg><use href="#au"/></svg><svg><use href="#ad"/></svg><svg><use href="#mag"/></svg><svg><use href="#hood"/></svg><svg><use href="#caps"/></svg><svg><use href="#w1"/></svg><svg><use href="#w2"/></svg><svg><use href="#w4"/></svg><svg><use href="#dia"/></svg><svg><use href="#dia"/></svg><svg><use href="#dia"/></svg><svg><use href="#dia"/></svg><svg><use href="#cube"/></svg><svg><use href="#cubet"/></svg><svg><use href="#cubef"/></svg><svg><use href="#cube"/></svg><svg><use href="#sl"/></svg><svg><use href="#sp"/></svg><svg><use href="#n13"/></svg><svg><use href="#therm"/></svg><svg><use href="#gauge"/></svg><svg><use href="#wt"/></svg><svg><use href="#ld"/></svg><svg><use href="#rot"/></svg><svg><use href="#rf"/></svg><svg><use href="#bow"/></svg><svg><use href="#rb"/></svg><svg><use href="#jn"/></svg><svg><use href="#oor"/></svg><svg><use href="#bl"/></svg><svg><use href="#vv"/></svg><svg><use href="#plant"/></svg><svg><use href="#rr"/></svg><svg><use href="#oor"/></svg>
      </div>
      <div class="tb tb3">
        <svg><use href="#lk"/></svg><svg><use href="#bd"/></svg><svg><use href="#jn"/></svg><svg><use href="#tri"/></svg><svg><use href="#bow"/></svg><svg><use href="#coil"/></svg><svg><use href="#rb"/></svg><svg><use href="#wv"/></svg><svg><use href="#crs"/></svg><svg><use href="#sight"/></svg><svg><use href="#t1"/></svg><svg><use href="#n13"/></svg><svg><use href="#tube"/></svg><svg><use href="#ld"/></svg><svg><use href="#rot"/></svg><svg><use href="#wt"/></svg><svg><use href="#wt2"/></svg><svg><use href="#loop"/></svg><svg><use href="#plant"/></svg><svg><use href="#vv"/></svg><svg><use href="#syr"/></svg><svg><use href="#rl"/></svg><svg><use href="#drop"/></svg><svg><use href="#bl"/></svg><svg><use href="#bl"/></svg><svg><use href="#ib"/></svg><svg><use href="#spk"/></svg>
      </div>
    </div>

    <div class="work">
      <div class="canvas">
        <svg class="scene" viewBox="3 225 1894 757" width="1894" height="757">
          <path d="M553 278L630 287V366L553 358Z" fill="#b6f6f6"/>
          <path d="M951 177L1551 249L1538 261L951 189Z" fill="#b2e2e2"/>
          <path d="M1538 261L1551 249V828L1538 842Z" fill="#b2e2e2"/>
          <path d="M951 189L1538 261V842L951 770Z" fill="#afffff"/>

          <path d="M931 647L1196 366L1294 378L1028 659Z" fill="#97491f"/>
          <path d="M1294 378V393L1253 436V640L1294 664L1029 947V930L988 925V670L1028 675V659Z" fill="#8f451e"/>
          <path d="M1253 640L1294 664L1029 947V930Z" fill="#97491f"/>
          <path d="M970 880L930 921L970 925Z" fill="#97491f"/>
          <path d="M931 647L1028 659V675L988 670V927L1028 930V947L930 937V921L970 925V666L931 662Z" fill="#ff8033"/>
          <path d="M979 625V797" stroke="#f00" stroke-width="3"/>
          <rect x="976" y="690" width="7" height="22" fill="#e80000"/>

          <g fill="none" stroke-linecap="butt">
            <path class="pd" d="M591 320L424 498"/>
            <path class="pd2" d="M591 320L424 498"/>
            <path class="pd3" d="M591 320L424 498"/>
          </g>
          <ellipse cx="591" cy="320" rx="19" ry="22" fill="#7c7c7c"/>
          <path d="M408 488Q382 514 391 542Q402 558 428 562L448 520Z" fill="url(#gElbow)"/>

          <g fill="none">
            <path class="a" d="M440 540L1510 668Q1567 676 1567 738V984"/>
            <path class="b" d="M440 540L1510 668Q1567 676 1567 738V984"/>
            <path class="c" d="M440 540L1510 668Q1567 676 1567 738V984"/>
            <path class="d" d="M440 540L1510 668Q1567 676 1567 738V984"/>
            <path class="a" d="M1305 1010Q1312 964 1345 963L1660 1000"/>
            <path class="b" d="M1305 1010Q1312 964 1345 963L1660 1000"/>
            <path class="c" d="M1305 1010Q1312 964 1345 963L1660 1000"/>
            <path class="d" d="M1305 1010Q1312 964 1345 963L1660 1000"/>
          </g>

          <path d="M392 545Q368 518 382 497Q402 478 425 492L435 509Q418 495 402 500Q382 510 388 530Z" fill="#ff0"/>
          <ellipse cx="436" cy="539" rx="12.500" ry="30" fill="#f2f200" transform="rotate(6 436 539)"/>
          <ellipse cx="440" cy="538" rx="7" ry="25" fill="#c4c4c4" transform="rotate(6 440 538)"/>

          <text class="lbl1" x="518" y="311">A20</text>
          <g fill="#009000">
            <path d="M510 297L516 306H540L536 297Z"/>
            <path d="M509 478L513 488H540L535 478Z"/>
            <path d="M429 374L437 367V393L429 397Z"/>
            <path d="M612 395L620 388V414L612 419Z"/>
            <path d="M518 367H533L531 372H516Z"/>
            <path d="M572 442L577 433H603L600 442Z"/>
            <path d="M547 390L551 388V401L547 403Z"/>
            <path d="M497 381L501 380V392L497 394Z"/>
          </g>
          <g stroke="#00e800" stroke-width="2.5">
            <path d="M524 307V345M434 381L472 385M615 403L577 400M524 478V442M588 442V455M588 522V538M1351 848V860M1351 930V943M1660 887V895M1629 920V930M1660 965V984"/>
          </g>
          <g fill="#00d800" stroke="#009000" stroke-width=".6">
            <path d="M515 340H533L524 368Z"/>
            <path d="M472 379V395L497 388Z"/>
            <path d="M577 392V407L552 397Z"/>
            <path d="M517 446H533L524 421Z"/>
          </g>
          <path d="M572 490H604V520Q588 530 572 520Z" fill="url(#gGreen)"/>
          <path d="M568 458Q588 446 607 458V488Q588 498 568 488Z" fill="url(#gGreen)"/>
          <ellipse cx="588" cy="458" rx="19" ry="6" fill="#00b000"/>
          <path d="M1331 862Q1351 850 1370 862V925Q1351 938 1331 925Z" fill="url(#gGreen)"/>
          <ellipse cx="1351" cy="862" rx="19" ry="7" fill="#00a800"/>
          <path d="M1336 843L1344 837H1367L1361 848H1342Z" fill="#009000"/>
          <path d="M1644 878L1650 875H1678L1672 887H1652Z" fill="#009000"/>
          <path d="M1648 938H1674V962Q1661 970 1648 962Z" fill="url(#gGreen)"/>
          <path d="M1642 900L1650 894H1679V930L1668 938H1642Z" fill="#00ee00"/>
          <path d="M1668 900H1679V930L1668 938Z" fill="#00a000"/>
          <path d="M1642 900L1650 894H1679L1668 900Z" fill="#00b000"/>
          <path d="M1612 912L1618 908H1646L1640 920H1620Z" fill="#009000"/>
          <path d="M1616 969H1642V984H1616Z" fill="url(#gGreen)"/>
          <path d="M1609 933L1617 927H1647V960L1638 969H1609Z" fill="#00ee00"/>
          <path d="M1638 933H1647V960L1638 969Z" fill="#00a000"/>
          <path d="M1609 933L1617 927H1647L1638 933Z" fill="#00b000"/>

          <g fill="#003f8f">
            <rect x="589" y="321" width="3" height="3"/><rect x="523" y="391" width="3" height="3"/><rect x="407" y="514" width="3" height="3"/><rect x="390" y="533" width="3" height="3"/><rect x="439" y="538" width="3" height="3"/><rect x="586" y="557" width="3" height="3"/><rect x="1517" y="669" width="3" height="3"/><rect x="1567" y="674" width="3" height="3"/><rect x="1566" y="723" width="3" height="3"/><rect x="1349" y="961" width="3" height="3"/><rect x="1300" y="955" width="3" height="3"/><rect x="978" y="796" width="3" height="3"/>
          </g>
          <rect x="1243" y="515" width="3" height="3" fill="#5c4a50"/>

          <g class="lbl">
            <text x="311" y="549">A19</text>
            <text x="616" y="528">A18</text>
            <text x="1627" y="626">A16</text>
            <text x="1242" y="892">A08</text>
            <text x="1753" y="954">A07</text>
            <text x="78" y="864">Z</text>
            <text x="92" y="886">Y</text>
            <text x="121" y="908">X</text>
            <text x="57" y="924">N</text>
          </g>
          <path d="M78 906V885" stroke="#50e050" stroke-width="2"/>
          <path d="M75 885H82L78 868Z" fill="#50ff50" stroke="#20a020" stroke-width=".6"/>
          <path d="M78 906L100 910" stroke="#4040ff" stroke-width="3"/>
          <path d="M99 904V916L118 911Z" fill="#4040ff"/>
          <path d="M78 906L61 926" stroke="#c0b000" stroke-width="2"/>
          <path d="M57 926L63 922L66 926L60 932Z" fill="#ff0"/>
          <path d="M78 906L86 897" stroke="#800000" stroke-width="3"/>
          <path d="M82 898L87 892L91 895L86 903Z" fill="#a00000" stroke="#f04040" stroke-width=".6"/>
        </svg>
      </div>
      <div class="vscroll"><i class="up"></i><b class="vthumb"></b><i class="dn"></i></div>
    </div>
    <div class="hscroll"><i class="lf"></i><b class="hthumb"></b><i class="rg"></i></div>

    <footer class="status">
      <div class="status-l">Creating geometry data...</div>
      <div class="status-r"><span class="c1"></span><span class="c2">A17</span><span class="c3">A</span><span class="c4">2540</span><span class="c5"></span></div>
    </footer>

    <div class="taskbar big">
      <div class="start"><svg class="k-w"><use href="#k-win"/></svg></div>
      <div class="search">
        <span class="cortana"></span>
        <span class="stext">Type here to search</span>
        <svg class="mic" viewBox="0 0 14 24"><rect x="3.500" y="1" width="7" height="14" rx="3" fill="none" stroke="#222" stroke-width="1.6"/><path d="M1 11V13Q1 18 7 18Q13 18 13 13V11M7 18V23M3 23H11" fill="none" stroke="#222" stroke-width="1.4"/></svg>
      </div>
      <div class="taskview"><svg class="k-t"><use href="#k-task"/></svg></div>
      <div class="apps">
        <div class="k"><svg><use href="#k-edge"/></svg></div>
        <div class="k"><svg><use href="#k-store"/></svg></div>
        <div class="k run"><svg><use href="#k-mail"/></svg></div>
        <div class="k run"><svg><use href="#k-outlook"/></svg></div>
        <div class="k run"><svg><use href="#k-teams"/></svg></div>
        <div class="k run on"><svg><use href="#k-ap"/></svg></div>
        <div class="k run"><svg><use href="#k-gear"/></svg></div>
        <div class="k run"><svg><use href="#k-chrome"/></svg></div>
        <div class="k run"><svg><use href="#k-exp"/></svg></div>
        <div class="k run"><svg><use href="#k-skype"/></svg></div>
        <div class="k run"><svg><use href="#k-note"/></svg></div>
        <div class="k run"><svg><use href="#k-excel"/></svg></div>
        <div class="k run"><svg><use href="#k-ie"/></svg></div>
        <div class="k run"><svg><use href="#k-bent"/></svg></div>
      </div>
      <div class="tray">
        <svg class="ty" viewBox="0 0 20 26"><circle cx="13" cy="7" r="4" fill="none" stroke="#fff" stroke-width="1.4"/><circle cx="6" cy="12" r="3" fill="none" stroke="#fff" stroke-width="1.4"/><path d="M8 25Q8 13 13 12Q18 13 18 20M2 25Q2 17 6 16" fill="none" stroke="#fff" stroke-width="1.4"/></svg>
        <svg class="ty tc" viewBox="0 0 20 26"><path d="M2 18L10 8L18 18" fill="none" stroke="#fff" stroke-width="1.4"/></svg>
        <svg class="ty" viewBox="0 0 20 26"><path d="M2 7H17V21H2ZM5 3V7" fill="none" stroke="#fff" stroke-width="1.4"/><rect x="5" y="10" width="10" height="9" fill="#fff"/></svg>
        <svg class="ty" viewBox="0 0 20 26"><path d="M2 24Q2 8 18 4M7 24Q7 14 18 10M12 24Q12 19 18 16" fill="none" stroke="#ccc" stroke-width="1.3"/><circle cx="17" cy="23" r="1.600" fill="#fff"/></svg>
        <svg class="ty" viewBox="0 0 20 26"><path d="M2 10H7L13 4V22L7 16H2Z" fill="none" stroke="#fff" stroke-width="1.3"/><path d="M16 9Q18 13 16 17" fill="none" stroke="#ccc"/></svg>
        <div class="clock"><span>2:29 PM</span><span>9/26/2019</span></div>
        <div class="notif"><svg viewBox="0 0 22 32" class="nf"><path d="M1 2H21V20H7L1 25Z" fill="#fff"/><path d="M5 7H17M5 11H17M5 15H14" stroke="#222"/></svg><span class="badge">1</span></div>
      </div>
    </div>

    <div class="note">
      <div class="note-title"><span>Note</span><span class="note-x">✕</span></div>
      <div class="note-body">
        <svg class="info" viewBox="0 0 40 40"><circle cx="20" cy="20" r="19" fill="#c8ccd0" stroke="#8a9098"/><circle cx="20" cy="20" r="16" fill="url(#gInfo)"/><circle cx="20" cy="11" r="2.800" fill="#fff"/><path d="M17.500 16H22.500V31H17.500Z" fill="#e8eef8"/></svg>
        <span>N187-21:&nbsp; PXF Export operation completed</span>
      </div>
      <div class="note-foot"><span class="ok">OK</span></div>
    </div>

    <svg class="cursor" viewBox="0 0 16 24"><path d="M1 1V18L5 14L8 22L11 21L8 13L14 13Z" fill="#fff" stroke="#222" stroke-width="1"/></svg>

    <div class="cmd">
      <div class="cmd-title"><svg class="cmd-ic" viewBox="0 0 20 20"><path d="M5 2Q11 1 14 4Q18 9 13 18H9Q12 10 9 6Q6 6 5 9Q3 6 5 2Z" fill="#333b44"/></svg><span>Command Search Utility</span><span class="cmd-x">✕</span></div>
      <div class="cmd-body"><label>Search:</label><div class="combo"><span class="combo-b">▼</span></div></div>
    </div>

    <div class="macro">
      <div class="macro-ic"><svg class="macro-g" viewBox="0 0 32 32" preserveAspectRatio="none"><use href="#k-gear"/></svg></div>
      <span class="macro-sep"></span>
      <span class="pause"></span><span class="pause"></span><span class="stop"></span>
    </div>
    <span class="tail"></span>
    <div class="toast">
      <div class="toast-t">Waiting for the dlgConfirmSaveAs object.</div>
      <div class="toast-bar"></div>
      <div class="toast-n">ImportExport-PXF_DTP</div>
    </div>
    <svg class="foot-ic" viewBox="0 0 20 20"><path d="M5 2Q11 1 14 4Q18 9 13 18H9Q12 10 9 6Q6 6 5 9Q3 6 5 2Z" fill="#222"/></svg>
    <span class="ribbon-more">▾</span>
  </section>

  <section class="exp">
    <div class="exp-body">
      <header class="exp-title">
        <svg class="x-q q1"><use href="#n-folder"/></svg>
        <span class="x-sep"></span>
        <svg class="x-q q2" viewBox="0 0 14 18"><path d="M1 1H13V17H1Z" fill="#fff" stroke="#9aa"/><path d="M4 9L7 12L11 5" fill="none" stroke="#d84020" stroke-width="1.6"/></svg>
        <svg class="x-q q3"><use href="#n-folder"/></svg>
        <span class="x-drop">▾</span>
        <span class="x-sep"></span>
        <span class="x-name">Discrepancies</span>
        <div class="win-ctl exp-ctl"><span class="min"></span><span class="rest"></span><span class="cls">✕</span></div>
      </header>
      <nav class="exp-tabs">
        <span class="x-file">File</span><span class="x-tab">Home</span><span class="x-tab">Share</span><span class="x-tab">View</span>
        <span class="x-chev"></span><span class="x-help">?</span>
      </nav>
      <div class="addr-row">
        <span class="nv back">←</span><span class="nv fwd">→</span><span class="nv dd">⌄</span><span class="nv upa">↑</span>
        <div class="addr">
          <svg class="a-f"><use href="#n-folder"/></svg>
          <span class="cr">›</span><span>Network</span><span class="cr">›</span><span>isbprdfs03</span><span class="cr">›</span><span>QA</span><span class="cr">›</span><span>TestingProjects</span><span class="cr">›</span><span>AlphaTesting</span><span class="cr">›</span><span>CAE</span><span class="cr">›</span><span>AutoPIPE</span><span class="cr">›</span><span>AutoPIPERegression</span><span class="cr">›</span><span>UIAutomation</span><span class="cr">›</span><span>Discrepancies</span><span class="cr">›</span>
          <span class="a-end"><span class="a-v">⌄</span><span class="a-r">↻</span></span>
        </div>
        <div class="xsearch"><span>Search Discrepancies</span><svg class="xs-i" viewBox="0 0 14 16"><circle cx="9" cy="5.500" r="4" fill="none" stroke="#666" stroke-width="1.6"/><path d="M6 9L2 15" stroke="#666" stroke-width="2"/></svg></div>
      </div>
      <div class="exp-main">
        <aside class="navp">
          <div class="grp">
            <div class="ni h"><svg><use href="#n-star"/></svg>Quick access</div>
            <div class="ni"><svg><use href="#n-desk"/></svg>Desktop<svg class="pin"><use href="#n-pin"/></svg></div>
            <div class="ni"><svg><use href="#n-down"/></svg>Downloads<svg class="pin"><use href="#n-pin"/></svg></div>
            <div class="ni"><svg><use href="#n-doc"/></svg>Documents<svg class="pin"><use href="#n-pin"/></svg></div>
            <div class="ni"><svg><use href="#n-pic"/></svg>Pictures<svg class="pin"><use href="#n-pin"/></svg></div>
            <div class="ni"><svg><use href="#n-folder"/></svg>Export</div>
            <div class="ni"><svg><use href="#n-folder"/></svg>Export</div>
            <div class="ni"><svg><use href="#n-folder"/></svg>Models</div>
            <div class="ni"><svg><use href="#n-folder"/></svg>Models</div>
          </div>
          <div class="grp"><div class="ni h"><svg><use href="#n-cloud"/></svg>OneDrive</div></div>
          <div class="grp">
            <div class="ni h"><svg><use href="#n-pc"/></svg>This PC</div>
            <div class="ni"><svg><use href="#n-3d"/></svg>3D Objects</div>
            <div class="ni"><svg><use href="#n-desk"/></svg>Desktop</div>
            <div class="ni"><svg><use href="#n-doc"/></svg>Documents</div>
            <div class="ni"><svg><use href="#n-down"/></svg>Downloads</div>
            <div class="ni"><svg><use href="#n-music"/></svg>Music</div>
            <div class="ni"><svg><use href="#n-pic"/></svg>Pictures</div>
            <div class="ni"><svg><use href="#n-vid"/></svg>Videos</div>
            <div class="ni"><svg><use href="#n-win"/></svg>Windows (C:)</div>
            <div class="ni"><svg><use href="#n-disk"/></svg>Data (D:)</div>
          </div>
          <div class="grp"><div class="ni h sel"><svg><use href="#n-net"/></svg>Network</div></div>
        </aside>
        <div class="list">
          <div class="lh"><span class="sort"></span><span>Name</span><span>Date modified</span><span>Type</span><span>Size</span></div>
          <div class="lr"><span><svg><use href="#n-folder"/></svg>ComponentsDTP</span><span>9/25/2019 11:26 AM</span><span>File folder</span></div>
          <div class="lr"><span><svg><use href="#n-folder"/></svg>DistributedLoad_DTP</span><span>9/26/2019 12:07 PM</span><span>File folder</span></div>
          <div class="lr"><span><svg><use href="#n-folder"/></svg>ExportDXF</span><span>9/26/2019 2:04 PM</span><span>File folder</span></div>
          <div class="lr"><span><svg><use href="#n-folder"/></svg>InsertAPModel</span><span>9/26/2019 12:33 PM</span><span>File folder</span></div>
          <div class="lr sel"><span><svg><use href="#n-folder"/></svg>SaveAsNTL</span><span>9/26/2019 2:04 PM</span><span>File folder</span></div>
        </div>
      </div>
      <footer class="exp-status">
        <span class="s1">5 items</span><span class="s2">1 item selected</span><span class="s3">State:</span><svg class="s-ic" viewBox="0 0 16 16"><circle cx="8" cy="8" r="7" fill="#fff" stroke="#60a830" stroke-width="2"/><path d="M4 8A4 4 0 0 1 12 8H9L11 11" fill="none" stroke="#e8a020" stroke-width="2"/></svg><span>Online</span>
        <span class="vw"><svg class="vb on" viewBox="0 0 20 22"><path d="M3 4H6V7H3ZM3 10H6V13H3ZM3 16H6V19H3ZM8 5H17M8 11H17M8 17H17" stroke="#667" fill="#eef"/></svg><svg class="vb" viewBox="0 0 20 22"><rect x="3" y="5" width="14" height="12" fill="#a8c8e8" stroke="#889"/><path d="M3 13L17 11V17H3Z" fill="#50806c"/></svg></span>
      </footer>
    </div>
    <div class="taskbar small">
      <div class="start"><svg class="k-w"><use href="#k-win"/></svg></div>
      <div class="cort"><span class="cortana"></span></div>
      <div class="taskview"><svg class="k-t"><use href="#k-task"/></svg></div>
      <div class="apps">
        <div class="k"><svg><use href="#k-edge"/></svg></div>
        <div class="k"><svg><use href="#k-store"/></svg></div>
        <div class="k run"><svg><use href="#k-mail"/></svg></div>
        <div class="k run"><svg><use href="#k-outlook"/></svg></div>
        <div class="k run"><svg><use href="#k-teams"/></svg></div>
        <div class="k run on"><svg><use href="#k-ap"/></svg></div>
        <div class="k run"><svg><use href="#k-gear"/></svg></div>
        <div class="k run"><svg><use href="#k-chrome"/></svg></div>
        <div class="k run"><svg><use href="#k-exp"/></svg></div>
        <div class="k run"><svg><use href="#k-skype"/></svg></div>
        <div class="k run"><svg><use href="#k-note"/></svg></div>
        <div class="k run"><svg><use href="#k-excel"/></svg></div>
        <div class="k run"><svg><use href="#k-ie"/></svg></div>
        <div class="k run"><svg><use href="#k-bent"/></svg></div>
      </div>
      <div class="clock"><span>2:29 PM</span><span>9/26/2019</span></div>
    </div>
  </section>
</div>
</body>
</html>
```
FILE: styles.css
```css
* { box-sizing: border-box; }
html, body { margin: 0; height: 100%; overflow: hidden; }
body { font-family: "Noto Sans", "Open Sans", sans-serif; font-size: 12px; color: #1a1a1a; background: #fff; }
.defs { position: absolute; }
svg { display: block; }
.screen { display: flex; width: 3840px; height: 1080px; }

/* ---------- application window ---------- */
.app { position: relative; width: 1920px; height: 1080px; display: flex; flex-direction: column; background: #bfd9fb; }
.app-title { position: relative; flex: 0 0 30px; background: #fff; display: flex; align-items: flex-start; }
.app-logo { position: absolute; left: 4px; top: 2px; width: 38px; height: 36px; border-radius: 50%; background: #0c4a9e; border: 2px solid #c4ccd8; display: flex; align-items: center; justify-content: center; box-shadow: 0 1px 3px #668; z-index: 3; }
.logo-i { width: 24px; height: 26px; }
.qat { margin: 2px 0 0 46px; width: 171px; height: 26px; border: 1px solid #c8ccd0; border-top: 0; border-radius: 0 16px 16px 8px; background: linear-gradient(#f8f8f8, #dfe6ee); display: flex; align-items: center; padding: 0 0 6px 9px; }
.q { width: 16px; height: 16px; margin-right: 13px; }
.qdrop { width: 0; height: 0; border: 3px solid transparent; border-top: 4px solid #345; margin: 6px 4px 0 4px; }
.qat-more { margin: 5px 0 0 9px; color: #1f4a90; font-size: 11px; line-height: 16px; }
.win-ctl { position: absolute; top: 0; display: flex; align-items: center; color: #8a8a8a; }
.win-ctl .min { width: 11px; height: 1px; background: #888; }
.win-ctl .rest { width: 10px; height: 11px; border: 1px solid #888; }
.win-ctl .cls { font-size: 14px; line-height: 20px; color: #888; }
.app-ctl { right: 26px; height: 28px; gap: 44px; }

.tabs { flex: 0 0 22px; display: flex; padding-left: 49px; align-items: flex-end; color: #15428b; position: relative; z-index: 2; }
.tab { height: 22px; line-height: 20px; padding: 0 13px; letter-spacing: -.25px; white-space: nowrap; }
.tab.active { padding: 0 12px; width: 41px; background: linear-gradient(#fff, #e4eefa); border: 1px solid #8cb4e4; border-bottom: 0; border-radius: 3px 3px 0 0; }
.t-home { margin-left: 3px; }

.ribbon { flex: 0 0 90px; display: flex; gap: 3px; padding: 2px 2px 4px 3px; background: linear-gradient(#d6e4f4 0, #dbe8f7 40%, #e8f4fb 100%); border-top: 1px solid #8cb4e4; border-bottom: 1px solid #b8e0ee; border-radius: 0 0 3px 3px; margin-right: 2px; margin-top: -1px; }
.panel { display: flex; flex-direction: column; border: 1px solid #b6cbe6; border-radius: 3px; background: linear-gradient(#dce7f5, #cddff2); }
.btns { flex: 1; display: flex; justify-content: space-between; padding: 3px 1px 0; }
.ptitle { flex: 0 0 15px; line-height: 14px; background: #c2d6ee; color: #4a76ae; text-align: center; letter-spacing: -.2px; }
.rb { display: flex; flex-direction: column; align-items: center; text-align: center; color: #15428b; line-height: 13px; letter-spacing: -.4px; white-space: nowrap; min-width: 34px; }
.rb span { margin-top: 3px; }
.rb i { font-style: normal; font-size: 8px; line-height: 11px; color: #446; margin-top: 2px; }
.ri { width: 32px; height: 32px; }
.p-file { flex: 0 0 224px; }
.p-save { flex: 0 0 152px; }
.p-iso { flex: 0 0 229px; }
.p-imp { flex: 0 0 181px; }
.p-print { flex: 0 0 92px; }
.p-model { flex: 0 0 270px; }
.p-dash { flex: 0 0 65px; }
.p-lic { flex: 0 0 158px; }
.p-file .btns { padding: 3px 9px 0 10px; }
.p-save .btns { padding: 3px 4px 0 10px; }
.p-iso .btns { padding: 3px 3px 0 3px; }
.p-imp .btns { padding: 3px 8px 0 8px; }
.p-print .btns { padding: 3px 8px 0 4px; }
.p-model .btns { padding: 3px 4px 0 4px; }
.p-lic .btns { padding: 3px 3px 0 3px; }

.toolbars { flex: 0 0 80px; padding-top: 2px; display: flex; flex-direction: column; gap: 1px; }
.tb { height: 25px; display: flex; align-items: center; gap: 4px; padding-left: 11px; background: linear-gradient(#d8e6f8, #bcd2f0); border-radius: 0 3px 3px 0; position: relative; margin-left: 2px; }
.tb::before { content: ""; position: absolute; left: 3px; top: 5px; bottom: 5px; border-left: 2px dotted #5a7aa8; }
.tb::after { content: "▾"; position: absolute; right: 0; bottom: 1px; width: 10px; height: 12px; font-size: 9px; line-height: 12px; text-align: center; color: #fff; background: #7ca4d8; }
.tb svg { flex: 0 0 18px; width: 18px; height: 18px; }
.tb1 { width: 241px; }
.tb2 { width: 923px; }
.tb3 { width: 615px; }

.work { flex: 1; display: flex; min-height: 0; background: #f0f0f0; border-top: 1px solid #666; border-left: 1px solid #666; }
.canvas { width: 1898px; height: 761px; border: 2px solid #ff0; background: #fff; overflow: hidden; }
.scene { overflow: hidden; }
.pd { stroke: #585858; stroke-width: 39px; }
.pd2 { stroke: #707070; stroke-width: 30px; }
.pd3 { stroke: #808080; stroke-width: 18px; }
.a { stroke: #6e6e6e; stroke-width: 41px; }
.b { stroke: #9c9c9c; stroke-width: 34px; }
.c { stroke: #bdbdbd; stroke-width: 24px; }
.d { stroke: #d4d4d4; stroke-width: 12px; }
.lbl text, .lbl1 { font-family: "Liberation Sans", sans-serif; font-size: 10.500px; fill: #000; }
.vscroll { flex: 1; position: relative; background: #f0f0f0; }
.vthumb { position: absolute; left: 0; right: 2px; top: 107px; height: 21px; background: #cdcdcd; }
.up, .dn, .lf, .rg { position: absolute; width: 7px; height: 7px; border: 1.500px solid #606060; border-width: 1.500px 0 0 1.500px; }
.up { top: 8px; left: 6px; transform: rotate(45deg); }
.dn { bottom: 7px; left: 6px; transform: rotate(225deg); }
.hscroll { flex: 0 0 22px; position: relative; background: #f0f0f0; border-left: 1px solid #666; border-bottom: 2px solid #666; border-top: 1px solid #f0f0f0; }
.hthumb { position: absolute; left: 502px; top: 0; width: 21px; height: 19px; background: #cdcdcd; }
.lf { left: 7px; top: 6px; transform: rotate(-45deg); }
.rg { left: 1883px; top: 6px; transform: rotate(135deg); }

.status { flex: 0 0 24px; display: flex; border-top: 1px solid #eaf3ff; background: linear-gradient(#b4cff2, #b8d2f5 60%, #c2daf8); color: #15428b; }
.status-l { flex: 0 0 1466px; padding: 3px 0 0 9px; line-height: 17px; letter-spacing: -.3px; }
.status-r { flex: 1; display: flex; background: linear-gradient(#93b4e4, #7ea5da); border-left: 1px solid #e8f0fa; padding-top: 3px; line-height: 17px; letter-spacing: -.3px; font-size: 11.500px; }
.status-r span { border-right: 1px solid #dce8f8; padding-left: 8px; height: 17px; }
.c1 { flex: 0 0 92px; }
.c2 { flex: 0 0 72px; }
.c3 { flex: 0 0 49px; }
.c4 { flex: 0 0 121px; }
.c5 { border: 0 !important; }

/* ---------- taskbars ---------- */
.taskbar { display: flex; align-items: stretch; background: linear-gradient(90deg, #1f2a2a 0, #1f2a2a 68%, #241b1b 76%, #1f1716 80%, #1f2a2a 88%, #1f2a2a 100%); color: #fff; flex: 0 0 auto; position: relative; }
.taskbar.big { height: 50px; flex-basis: 50px; }
.taskbar.small { height: 40px; flex-basis: 40px; }
.start { display: flex; align-items: center; justify-content: center; flex: 0 0 60px; }
.k-w { width: 21px; height: 22px; }
.search { flex: 0 0 430px; background: #f2f2f2; border-top: 1px solid #b8b8b8; display: flex; align-items: center; padding-left: 10px; color: #222; position: relative; }
.cortana { display: block; width: 28px; height: 28px; border-radius: 50%; border: 3px solid #111; flex: 0 0 auto; }
.stext { margin-left: 12px; font-size: 15px; letter-spacing: -.2px; color: #333; }
.mic { position: absolute; left: 396px; top: 12px; width: 14px; height: 24px; }
.taskview { flex: 0 0 64px; display: flex; align-items: center; justify-content: center; }
.k-t { width: 20px; height: 20px; margin-left: -6px; }
.apps { display: flex; }
.k { position: relative; flex: 0 0 62px; width: 62px; display: flex; align-items: center; justify-content: center; }
.k svg { width: 29px; height: 29px; }
.k.run::after { content: ""; position: absolute; left: 5px; right: 5px; bottom: 0; height: 3px; background: #76b9ed; }
.k.on { background: #4a5050; }
.tray { margin-left: 181px; display: flex; align-items: center; flex: 1; min-width: 0; }
.ty { width: 18px; height: 26px; margin-left: 12px; }
.tc { margin-left: 17px; }
.clock { display: flex; flex-direction: column; align-items: center; font-size: 15px; line-height: 22px; color: #e8e8e8; letter-spacing: -.5px; }
.big .clock { margin-left: 18px; width: 80px; }
.notif { position: relative; margin-left: 28px; }
.nf { width: 20px; height: 30px; margin-top: -8px; }
.badge { position: absolute; left: 2px; top: 12px; width: 21px; height: 21px; border-radius: 50%; border: 2px solid #777; color: #ddd; font-size: 14px; line-height: 17px; text-align: center; background: #1f2a2a; }

.small .start { flex-basis: 48px; }
.cort { flex: 0 0 47px; display: flex; align-items: center; justify-content: center; }
.small .cortana { width: 18px; height: 24px; border: 2px solid #eee; }
.small .taskview { flex: 0 0 52px; }
.small .k-t { width: 16px; height: 20px; margin: 0; }
.small .k { flex: 0 0 49px; width: 49px; }
.small .k svg { width: 23px; height: 23px; }
.small .k.run::after { left: 4px; right: 4px; }
.small .clock { margin-left: auto; margin-right: 8px; justify-content: center; font-size: 12px; line-height: 18px; letter-spacing: -.3px; }

/* ---------- dialogs over the app ---------- */
.note { position: absolute; left: 765px; top: 407px; width: 390px; height: 208px; background: #fff; border: 1px solid #707070; box-shadow: 0 3px 14px rgba(0,0,0,.35); display: flex; flex-direction: column; z-index: 5; }
.note-title { flex: 0 0 36px; display: flex; justify-content: space-between; align-items: center; padding: 0 15px 0 10px; font-size: 14px; color: #222; }
.note-x { font-size: 15px; color: #111; }
.note-body { flex: 1; display: flex; align-items: flex-start; padding: 34px 0 0 28px; color: #111; font-size: 13.400px; }
.note-body span { margin: 12px 0 0 15px; line-height: 18px; white-space: nowrap; }
.info { width: 40px; height: 40px; }
.note-foot { flex: 0 0 63px; background: #f0f0f0; display: flex; justify-content: flex-end; padding: 16px 22px 0 0; }
.ok { width: 100px; height: 32px; border: 2px solid #6e6e6e; background: #e8e8e8; box-shadow: inset 0 0 0 1px #fff; text-align: center; line-height: 28px; font-size: 13px; }
.cursor { position: absolute; left: 916px; top: 616px; width: 16px; height: 24px; z-index: 6; }

.cmd { position: absolute; left: 943px; top: 174px; width: 576px; height: 85px; background: #f0f0f0; border: 1px solid #b8b8b8; box-shadow: 0 2px 10px rgba(0,0,0,.3); z-index: 5; display: flex; flex-direction: column; }
.cmd-title { flex: 0 0 37px; background: #fff; display: flex; align-items: center; padding: 0 14px 0 6px; color: #9a9a9a; font-size: 14.500px; letter-spacing: -.3px; }
.cmd-ic { width: 20px; height: 20px; margin-right: 7px; }
.cmd-x { margin-left: auto; color: #888; font-size: 15px; }
.cmd-body { flex: 1; display: flex; align-items: center; padding: 0 13px 4px 6px; gap: 7px; }
.cmd-body label { font-size: 13.500px; flex: 0 0 48px; }
.combo { flex: 1; height: 27px; background: #fff; border: 1px solid #ddd; border-top: 2px solid #777; border-left: 2px solid #777; display: flex; justify-content: flex-end; }
.combo-b { width: 20px; background: #f0f0f0; border-right: 1px solid #777; border-bottom: 1px solid #777; text-align: center; font-size: 9px; line-height: 25px; color: #000; }

.foot-ic { position: absolute; left: 1793px; top: 35px; width: 16px; height: 15px; z-index: 3; }
.ribbon-more { position: absolute; left: 1911px; top: 34px; font-size: 10px; color: #345; z-index: 3; }
.macro { position: absolute; left: 1809px; top: 25px; width: 102px; height: 40px; background: #f8f8f8; border: 1px solid #c4c4c4; border-radius: 3px; display: flex; align-items: flex-start; padding: 2px; z-index: 6; }
.macro-ic { width: 33px; height: 25px; border: 2px solid #222; background: #40d8e0; }
.macro-g { width: 29px; height: 21px; }
.macro-sep { width: 1px; height: 34px; background: #bbb; margin: 0 0 0 4px; }
.pause { width: 9px; height: 16px; background: #00a2ff; margin: 9px 0 0 4px; }
.macro-sep + .pause { margin-left: 9px; }
.stop { width: 16px; height: 16px; background: #00a2ff; margin: 9px 0 0 4px; }
.tail { position: absolute; left: 1900px; top: 61px; width: 8px; height: 8px; background: #fff; border-left: 1px solid #888; border-top: 1px solid #888; transform: skewX(-20deg); z-index: 7; }
.toast { position: absolute; left: 1660px; top: 68px; width: 250px; height: 55px; background: #fff; border: 1px solid #6a6a6a; border-width: 1px 1px 2px 1px; padding: 3px 3px 0 4px; z-index: 6; color: #111; line-height: 16px; letter-spacing: -.3px; }
.toast-t { padding-left: 3px; white-space: nowrap; }
.toast-bar { height: 10px; background: #e2e2e2; border: 1px solid #ccc; margin-top: 1px; }
.toast-n { text-align: right; margin-top: 2px; padding-right: 2px; }

/* ---------- explorer ---------- */
.exp { width: 1920px; height: 1080px; display: flex; flex-direction: column; background: #fff; }
.exp-body { flex: 0 0 1040px; display: flex; flex-direction: column; }
.exp-title { flex: 0 0 23px; display: flex; align-items: center; position: relative; color: #999; }
.x-q { width: 14px; height: 16px; }
.q1 { width: 10px; }
.x-sep { width: 1px; height: 14px; background: #ccc; margin: 0 8px 0 12px; }
.q2 { width: 13px; height: 17px; }
.q3 { margin-left: 7px; width: 10px; }
.x-drop { margin-left: 11px; color: #333; font-size: 10px; }
.x-name { color: #a0a0a0; letter-spacing: -.2px; }
.exp-ctl { right: 18px; height: 20px; gap: 33px; }
.exp-tabs { flex: 0 0 24px; display: flex; align-items: stretch; border-bottom: 1px solid #d8d8d8; position: relative; }
.x-file { width: 56px; background: #0063b1; color: #fff; text-align: center; line-height: 22px; }
.x-tab { line-height: 22px; margin-left: 14px; margin-right: 15px; color: #333; letter-spacing: -.1px; }
.x-chev { position: absolute; left: 1884px; top: 8px; width: 6px; height: 6px; border: solid #aaa; border-width: 0 1px 1px 0; transform: rotate(45deg); }
.x-help { position: absolute; left: 1902px; top: 4px; width: 14px; height: 15px; border-radius: 50%; background: #0063b1; color: #fff; font-size: 11px; font-weight: 700; line-height: 15px; text-align: center; }
.addr-row { flex: 0 0 35px; display: flex; align-items: flex-start; padding-top: 6px; position: relative; }
.nv { position: absolute; top: 7px; color: #888; font-size: 16px; line-height: 20px; }
.back { left: 10px; color: #777; }
.fwd { left: 41px; color: #ccc; }
.dd { left: 68px; font-size: 11px; line-height: 14px; color: #888; }
.upa { left: 86px; color: #444; }
.addr { margin-left: 106px; width: 1588px; height: 22px; border: 1px solid #d9d9d9; display: flex; align-items: center; padding-left: 4px; color: #1a1a1a; position: relative; letter-spacing: -.2px; white-space: nowrap; }
.a-f { width: 14px; height: 15px; margin-left: 1px; }
.cr { color: #777; width: 21.500px; text-align: center; flex: 0 0 21.500px; }
.a-f + .cr { width: 21px; flex-basis: 21px; }
.a-end { position: absolute; right: 0; top: 0; bottom: 0; display: flex; align-items: center; color: #777; }
.a-v { margin-right: 5px; font-size: 11px; line-height: 11px; margin-top: -5px; }
.a-r { border-left: 1px solid #d9d9d9; width: 17px; height: 100%; text-align: center; line-height: 19px; font-size: 13px; }
.xsearch { margin-left: 12px; width: 202px; height: 22px; border: 1px solid #d9d9d9; display: flex; align-items: center; padding: 0 8px; color: #6d6d6d; justify-content: space-between; letter-spacing: -.25px; white-space: nowrap; }
.xs-i { width: 13px; height: 16px; }
.exp-main { flex: 1; display: flex; min-height: 0; }
.navp { flex: 0 0 309px; border-right: 1px solid #f0f0f0; padding: 16px 2px 0 0; }
.grp { margin-bottom: 8px; }
.ni { height: 24px; display: flex; align-items: center; padding-left: 53px; padding-bottom: 2px; position: relative; color: #1a1a1a; }
.ni svg { position: absolute; left: 32px; top: 4px; width: 16px; height: 16px; }
.ni.h { padding-left: 45px; }
.ni.h svg { left: 24px; }
.ni svg.pin { left: 292px; top: 5px; width: 12px; height: 15px; }
.ni.sel { background: #d8d8d8; }
.list { flex: 1; position: relative; padding: 0 0 0 15px; }
.lh { display: grid; grid-template-columns: 258px 120px 120px 79px; height: 25px; align-items: center; color: #5a6d84; position: relative; letter-spacing: -.1px; }
.lh span { padding-left: 6px; height: 25px; line-height: 26px; border-right: 1px solid #e5e5e5; }
.sort { position: absolute; left: 124px; top: 2px; width: 7px !important; height: 7px !important; padding: 0 !important; border: solid #999 !important; border-width: 1px 0 0 1px !important; transform: rotate(45deg); }
.lr { display: grid; grid-template-columns: 264px 120px 190px; width: 574px; height: 21px; align-items: center; color: #6d6d6d; }
.lh + .lr { margin-top: 6px; }
.lr span:first-child { display: flex; align-items: center; color: #1a1a1a; }
.lr svg { width: 14px; height: 16px; margin: 0 6px 0 4px; flex: 0 0 auto; }
.lr span { letter-spacing: -.2px; white-space: nowrap; }
.lr.sel { background: #d9d9d9; height: 22px; }
.exp-status { flex: 0 0 22px; display: flex; align-items: center; padding-left: 15px; position: relative; color: #1a1a1a; letter-spacing: -.3px; white-space: nowrap; }
.s1 { width: 58px; }
.s2 { width: 98px; }
.s3 { width: 40px; }
.s-ic { width: 15px; height: 15px; margin-right: 1px; }
.vw { position: absolute; right: 10px; top: 0; display: flex; }
.vb { width: 20px; height: 22px; }
.vb.on { background: #cce8ff; border: 1px solid #5aa8e0; }
```
